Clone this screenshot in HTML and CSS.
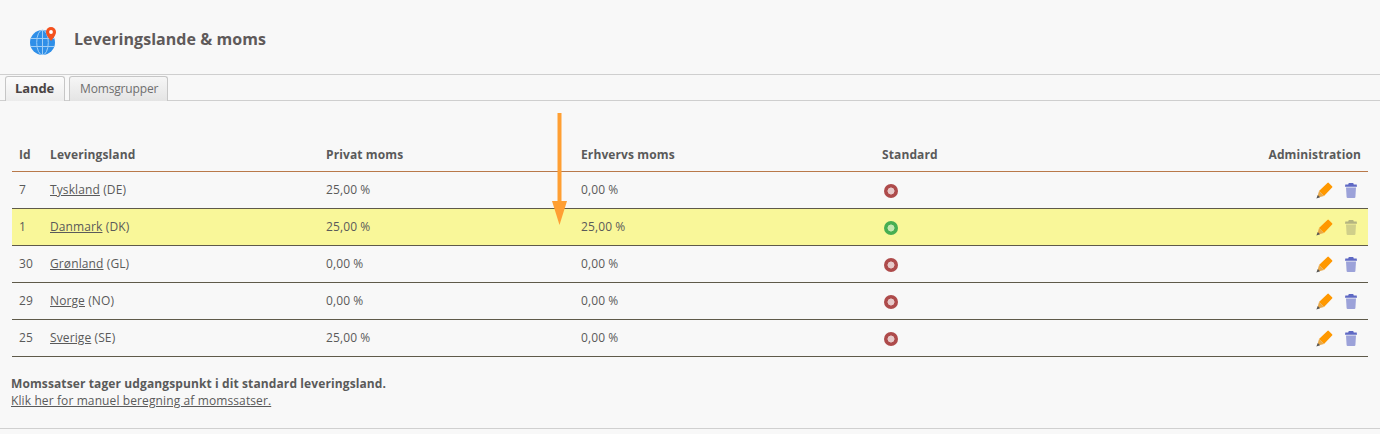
FILE: index.html
```html
<!DOCTYPE html>
<html lang="da">
<head>
<meta charset="utf-8">
<title>Leveringslande &amp; moms</title>
<link rel="stylesheet" href="styles.css">
</head>
<body>
<svg class="sprites" width="0" height="0" aria-hidden="true">
  <symbol id="pencil" viewBox="0 0 17 17">
    <path d="M3 9 11.400.9a1 1 0 0 1 1.400 0l3.300 3.300a1 1 0 0 1 0 1.400L8 14Z" fill="#ff9800"/>
    <path d="M3 9 8 14 1.200 15.800Z" fill="#e8a848"/>
    <path d="M1.800 12.900 4.100 15.200.4 16.600Z" fill="#555"/>
  </symbol>
  <symbol id="trash" viewBox="0 0 12 15">
    <path d="M3.800 0h4.400l.6 1.400H11.700L12 3.800H0L.3 1.400H3.200Z" fill="currentColor"/>
    <path d="M1 4.600h10l-.6 9.500a1 1 0 0 1-1 .9H2.600a1 1 0 0 1-1-.9Z" fill="currentColor" opacity=".6"/>
  </symbol>
</svg>
<header class="page-head">
  <svg class="globe" width="30" height="30" viewBox="0 0 30 30" aria-hidden="true">
    <circle cx="14.500" cy="17.500" r="12.500" fill="#2f8fe8"/>
    <g fill="none" stroke="#9fcdf5" stroke-width="1">
      <ellipse cx="14.500" cy="17.500" rx="5.800" ry="12.500"/>
      <path d="M14.500 5v25M3 13.500h23M3 21.500h23"/>
    </g>
    <path d="M23 2a5 5 0 0 0-5 5c0 3.500 5 9 5 9s5-5.500 5-9a5 5 0 0 0-5-5Z" fill="#f4511e"/>
    <circle cx="23" cy="7" r="1.900" fill="#fff"/>
  </svg>
  <h1 class="page-title">Leveringslande &amp; moms</h1>
</header>
<nav class="tabs">
  <a class="tab tab-active">Lande</a>
  <a class="tab">Momsgrupper</a>
</nav>
<main class="content">
  <table class="grid">
    <thead>
      <tr>
        <th class="c-id">Id</th><th class="c-land">Leveringsland</th><th class="c-priv">Privat moms</th><th class="c-erh">Erhvervs moms</th><th class="c-std">Standard</th><th class="c-adm">Administration</th>
      </tr>
    </thead>
    <tbody>
      <tr>
        <td>7</td><td><a class="link">Tyskland</a> (DE)</td><td>25,00 %</td><td>0,00 %</td><td><span class="dot dot-off"></span></td>
        <td class="c-adm"><span class="actions"><svg class="ico-pencil"><use href="#pencil"/></svg><svg class="ico-trash"><use href="#trash"/></svg></span></td>
      </tr>
      <tr class="row-std">
        <td>1</td><td><a class="link">Danmark</a> (DK)</td><td>25,00 %</td><td>25,00 %</td><td><span class="dot dot-on"></span></td>
        <td class="c-adm"><span class="actions"><svg class="ico-pencil"><use href="#pencil"/></svg><svg class="ico-trash ico-disabled"><use href="#trash"/></svg></span></td>
      </tr>
      <tr>
        <td>30</td><td><a class="link">Grønland</a> (GL)</td><td>0,00 %</td><td>0,00 %</td><td><span class="dot dot-off"></span></td>
        <td class="c-adm"><span class="actions"><svg class="ico-pencil"><use href="#pencil"/></svg><svg class="ico-trash"><use href="#trash"/></svg></span></td>
      </tr>
      <tr>
        <td>29</td><td><a class="link">Norge</a> (NO)</td><td>0,00 %</td><td>0,00 %</td><td><span class="dot dot-off"></span></td>
        <td class="c-adm"><span class="actions"><svg class="ico-pencil"><use href="#pencil"/></svg><svg class="ico-trash"><use href="#trash"/></svg></span></td>
      </tr>
      <tr>
        <td>25</td><td><a class="link">Sverige</a> (SE)</td><td>25,00 %</td><td>0,00 %</td><td><span class="dot dot-off"></span></td>
        <td class="c-adm"><span class="actions"><svg class="ico-pencil"><use href="#pencil"/></svg><svg class="ico-trash"><use href="#trash"/></svg></span></td>
      </tr>
    </tbody>
  </table>
  <p class="note"><strong>Momssatser tager udgangspunkt i dit standard leveringsland.</strong><br><a class="link">Klik her for manuel beregning af momssatser.</a></p>
</main>
<svg class="arrow" width="16" height="114" viewBox="0 0 16 114" aria-hidden="true">
  <path d="M5.500 0h4v88H15L7.500 112 0 88h5.500Z" fill="#ff9f33"/>
</svg>
</body>
</html>
```
FILE: styles.css
```css
* { box-sizing: border-box; }
html, body { margin: 0; padding: 0; }
body {
  position: relative;
  height: 434px;
  overflow: hidden;
  background: #f8f8f8;
  color: #5a5a5a;
  font: 12px/17px "Open Sans", "Noto Sans", sans-serif;
  letter-spacing: .11px;
}
.sprites { position: absolute; }
.page-head {
  display: flex;
  align-items: center;
  height: 75px;
  padding: 0 0 0 28px;
  border-bottom: 1px solid #cfcfcf;
}
.globe { flex: none; margin-top: 6px; }
.page-title {
  margin: 4px 0 0 16px;
  font-size: 16px;
  font-weight: 700;
  letter-spacing: .05px;
  color: #5f5a5a;
}
.tabs {
  display: flex;
  gap: 4px;
  height: 26px;
  padding: 1px 0 0 5px;
  border-bottom: 1px solid #cfcfcf;
}
.tab {
  display: block;
  height: 25px;
  width: 99px;
  padding: 3px 10px 0;
  border: 1px solid #c6c6c6;
  border-bottom: 0;
  border-radius: 3px 3px 0 0;
  background: linear-gradient(#f6f6f6, #e4e4e4);
  color: #6e6e6e;
  letter-spacing: -.15px;
}
.tab-active {
  width: 60px;
  padding: 3px 9px 0;
  background: linear-gradient(#fcfcfc, #ececec);
  font-size: 13px;
  font-weight: 700;
  letter-spacing: -.1px;
  color: #4a4444;
}
.content { padding: 33px 12px 0; }
.grid {
  width: 1356px;
  border-collapse: collapse;
  table-layout: fixed;
}
.grid th, .grid td {
  padding: 0 7px;
  height: 37px;
  text-align: left;
  border-bottom: 1px solid #5f5a4a;
}
.grid th {
  padding-top: 5px;
  font-weight: 700;
  color: #5a5a5a;
  border-bottom-color: #b9794a;
}
.c-id { width: 31px; }
.c-land { width: 276px; }
.c-priv { width: 255px; }
.c-erh { width: 301px; }
.c-std { width: 300px; }
.grid .c-adm { text-align: right; }
.row-std td { background: #f9f799; }
.link { color: #5a5a5a; text-decoration: underline; }
.dot {
  display: block;
  width: 14px;
  height: 14px;
  margin: 2px 0 0 2px;
  border-radius: 50%;
  background: radial-gradient(circle, #e6c9c9 0 3.200px, #ae4b4b 3.800px);
}
.dot-on { background: radial-gradient(circle, #c5e6b0 0 3.200px, #47ae52 3.800px); }
.actions { display: inline-flex; align-items: center; gap: 12px; vertical-align: middle; margin: 2px 4px 0 0; }
.ico-pencil { width: 17px; height: 17px; }
.ico-trash { width: 12px; height: 15px; color: #5f69c4; }
.ico-disabled { color: #b4b480; }
.note { margin: 18px 0 0 -1px; }
.note strong { color: #5a5a5a; }
.arrow { position: absolute; left: 552px; top: 113px; }
body::after {
  content: "";
  position: absolute;
  left: 0;
  right: 0;
  top: 428px;
  border-top: 1px solid #d0d0d0;
}
```
